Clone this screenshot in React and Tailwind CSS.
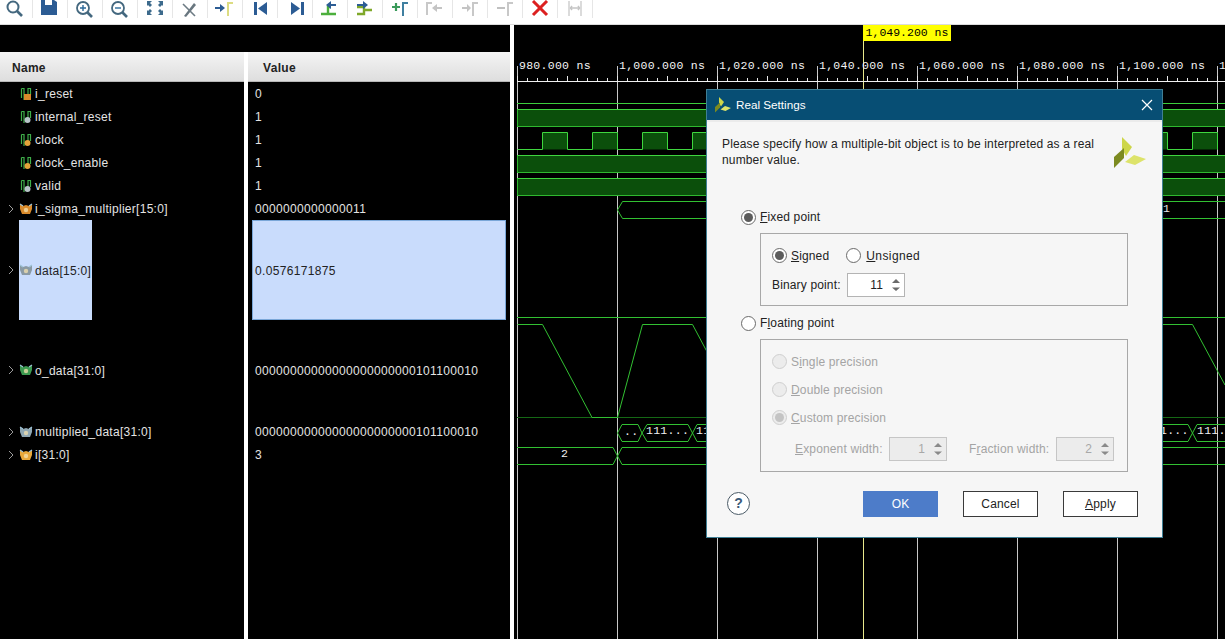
import React from "react";

const sans = { fontFamily: '"Liberation Sans", Arial, sans-serif' };
const mono = '"Liberation Mono", monospace';

const signals = [
  { name: "i_reset", value: "0", color: "#d98a2b", shape: "square", h: "h-[23px]" },
  { name: "internal_reset", value: "1", color: "#b8c4c8", shape: "circle", h: "h-[23px]" },
  { name: "clock", value: "1", color: "#e5a33a", shape: "circle", h: "h-[23px]" },
  { name: "clock_enable", value: "1", color: "#e5a33a", shape: "circle", h: "h-[23px]" },
  { name: "valid", value: "1", color: "#b8c4c8", shape: "circle", h: "h-[23px]" },
  { name: "i_sigma_multiplier[15:0]", value: "0000000000000011", color: "#d98a2b", shape: "bus", h: "h-[23px]", bus: true },
  { name: "data[15:0]", value: "0.0576171875", color: "#8a9aa4", shape: "bus", h: "h-[100px]", bus: true, selected: true, tall: true },
  { name: "o_data[31:0]", value: "00000000000000000000000101100010", color: "#3c9a50", shape: "bus", h: "h-[100px]", bus: true, tall: true },
  { name: "multiplied_data[31:0]", value: "00000000000000000000000101100010", color: "#90a8b4", shape: "bus", h: "h-[23px]", bus: true },
  { name: "i[31:0]", value: "3", color: "#e8a83a", shape: "bus", h: "h-[23px]", bus: true },
];

const SignalIcon = ({ color, shape }) => {
  if (shape === "bus") {
    return (
      <svg width="14" height="12" viewBox="0 0 14 12" className="shrink-0">
        <path d="M1 1l3 2 3-1 3 1 3-2v5l-2 5H3L1 6z" fill={color} />
        <path d="M1 1l3 2M13 1l-3 2" stroke="#9ec4d8" strokeWidth="1.2" fill="none" />
        <circle cx="7" cy="7" r="2.2" fill="#f4e2b0" opacity="0.75" />
      </svg>
    );
  }
  return (
    <svg width="14" height="14" viewBox="0 0 14 14" className="shrink-0">
      <path d="M2.5 11V1.5M2.5 1.5H5V13M9 8V1.5H11.5V8" stroke="#3fae4a" strokeWidth="1.2" fill="none" />
      {shape === "square" ? (
        <rect x="5" y="7" width="7" height="6" fill={color} />
      ) : (
        <circle cx="8.5" cy="10" r="3" fill={color} />
      )}
    </svg>
  );
};

// toolbar marker: the yellow or grey bracket used by several icons
const Bracket = ({ x, c = "#dcdc82" }) => <path d={`M${x} 16V3h5`} stroke={c} strokeWidth="2" fill="none" />;

const toolbarIcons = [
  <g key="s" fill="none" stroke="#44687f" strokeWidth="2"><circle cx="14" cy="7" r="5.5" /><path d="M18 11l5 5" strokeWidth="2.6" /></g>,
  <path key="d" d="M7 0h4v5h7V0h2l3 2v13H7z" fill="#2c5c94" />,
  <g key="zi" fill="none" stroke="#44687f" strokeWidth="1.8"><circle cx="14" cy="8" r="6" /><path d="M18.5 12.5l4.5 4.5" strokeWidth="2.6" /><path d="M11 8h6M14 5v6" stroke="#2c6a9a" strokeWidth="1.4" /></g>,
  <g key="zo" fill="none" stroke="#44687f" strokeWidth="1.8"><circle cx="14" cy="8" r="6" /><path d="M18.5 12.5l4.5 4.5" strokeWidth="2.6" /><path d="M11 8h6" stroke="#2c6a9a" strokeWidth="1.4" /></g>,
  <g key="f" fill="#3c6a8c"><path d="M8 1h5l-2 2 2 2-2 2-2-2-1 1zM24 1h-5l2 2-2 2 2 2 2-2 1 1zM8 15h5l-2-2 2-2-2-2-2 2-1-1zM24 15h-5l2-2-2-2 2-2 2 2 1-1z" /></g>,
  <g key="x" fill="none"><path d="M10 16L20 3l2 2-10 12z" fill="#68767f" /><path d="M9 4l12 12" stroke="#6d7b84" strokeWidth="1.6" /></g>,
  <g key="m"><path d="M6 7h5V4l5 4-5 4V9H6z" fill="#2c5c94" /><Bracket x={19} /></g>,
  <g key="p"><rect x="10" y="2" width="3" height="13" fill="#2c5c94" /><path d="M23 2v13l-9-6.5z" fill="#2c5c94" /></g>,
  <g key="n"><rect x="22" y="2" width="3" height="13" fill="#2c5c94" /><path d="M12 2v13l9-6.5z" fill="#2c5c94" /></g>,
  <g key="e1"><path d="M7 14h7V7h3M14 14h8" stroke="#4caf3c" strokeWidth="2.4" fill="none" /><path d="M22 4h-5V1l-5 4 5 4V6h5z" fill="#2c5c94" /></g>,
  <g key="e2"><path d="M8 7h7v7h-7M15 10h8" stroke="#7fa82a" strokeWidth="2.4" fill="none" /><path d="M8 4h6V1l5 4-5 4V6H8z" fill="#2c5c94" /></g>,
  <g key="a"><path d="M8 7h8M12 3v8" stroke="#3a9a5a" strokeWidth="2.2" /><path d="M19 16V3h5" stroke="#3f7fa0" strokeWidth="2" fill="none" /></g>,
  <g key="g1"><path d="M8 15V3h5" stroke="#c8c8c8" strokeWidth="2" fill="none" /><path d="M23 7h-5V4l-5 4 5 4V9h5z" fill="#c4c4c4" /></g>,
  <g key="g2"><path d="M8 7h5V4l4 4-4 4V9H8z" fill="#c4c4c4" /><Bracket x={19} c="#c8c8c8" /></g>,
  <g key="g3"><path d="M8 8h8" stroke="#c0c0c0" strokeWidth="2" /><Bracket x={19} c="#c8c8c8" /></g>,
  <g key="del"><path d="M9 1l14 14M23 1L9 15" stroke="#dc2020" strokeWidth="3" /></g>,
  <g key="w" fill="none" stroke="#cfcfcf" strokeWidth="1.5"><path d="M10 1v15M22 1v15" /><path d="M12 8h8" stroke="#c4c4c4" /><path d="M13 6l-1.5 2 1.5 2M19 6l1.5 2-1.5 2" stroke="#c4c4c4" /></g>,
];

const rulerLabels = [
  ["980.000 ns", 519],
  ["1,000.000 ns", 619],
  ["1,020.000 ns", 719],
  ["1,040.000 ns", 819],
  ["1,060.000 ns", 919],
  ["1,080.000 ns", 1019],
  ["1,100.000 ns", 1119],
  ["1", 1219],
];

const minorTicks = Array.from({ length: 71 }, (_, i) => 517.5 + i * 10);
const gridLines = [517.5, 617.5, 717.5, 817.5, 917.5, 1017.5, 1117.5, 1217.5];

let clockPath = "M517.5 149.5";
for (let x = 542.5; x < 1225; x += 50) {
  clockPath += `H${x}V132.5H${x + 25}V149.5`;
}

const Waves = () => (
  <svg viewBox="514 25 711 614" width="711" height="614" className="block">
    {/* vertical grid */}
    {gridLines.map((x) => (
      <line key={x} x1={x} x2={x} y1="66" y2="639" stroke="#c8c8c8" />
    ))}
    <line x1="863.5" x2="863.5" y1="41" y2="639" stroke="#e8e88c" />

    {/* ruler */}
    <line x1="517" x2="1225" y1="81.5" y2="81.5" stroke="#f0f0f0" />
    {minorTicks.map((x, i) => (
      <line key={x} x1={x} x2={x} y1={i % 5 === 0 ? 76 : 78} y2="81" stroke="#e8e8e8" />
    ))}
    {rulerLabels.map(([t, x]) => (
      <text key={x} x={x} y="69" fill="#f4f4f4" fontSize="11.5" fontFamily={mono}>
        {t}
      </text>
    ))}

    {/* i_reset */}
    <line x1="517" x2="1225" y1="103.5" y2="103.5" stroke="#3ccf3c" />
    {/* internal_reset */}
    <rect x="517.5" y="109.5" width="708" height="17" fill="#0b4f0b" stroke="#2fb82f" />
    <line x1="517" x2="1225" y1="109.5" y2="109.5" stroke="#3fd63f" />
    {/* clock */}
    {Array.from({ length: 14 }, (_, i) => (
      <rect key={i} x={542.5 + i * 50} y="132.5" width="25" height="17" fill="#0b4f0b" />
    ))}
    <path d={clockPath} fill="none" stroke="#3fd63f" />
    {/* clock_enable and valid */}
    <rect x="517.5" y="155.5" width="708" height="17" fill="#0b4f0b" stroke="#2fb82f" />
    <line x1="517" x2="1225" y1="155.5" y2="155.5" stroke="#3fd63f" />
    <rect x="517.5" y="178.5" width="708" height="17" fill="#0b4f0b" stroke="#2fb82f" />
    <line x1="517" x2="1225" y1="178.5" y2="178.5" stroke="#3fd63f" />

    {/* i_sigma_multiplier */}
    <path d="M1225 201.5H622.5L617.5 210L622.5 218.5H1225" fill="none" stroke="#32c032" />
    <text x="1163" y="212" fill="#e8e8e8" fontSize="11.5" fontFamily={mono}>1</text>

    {/* data */}
    <line x1="517" x2="1225" y1="317.5" y2="317.5" stroke="#32c032" />

    {/* o_data */}
    <line x1="517" x2="1225" y1="417.5" y2="417.5" stroke="#156815" />
    <path d="M517.5 324.5H542.5L592 417.5H617.5L642.5 324.5H692.5L742 417.5" fill="none" stroke="#32c032" />
    <path d="M1163 324.5H1192.5L1225 385" fill="none" stroke="#32c032" />

    {/* multiplied_data */}
    <path d="M642 433L638 424.5H622L617.5 433L622 441.5H638L642 433L647 424.5H688L692.5 433L697 424.5H707M642 433L647 441.5H688L692.5 433L697 441.5H707" fill="none" stroke="#32c032" />
    <path d="M1163 424.5H1188L1192.5 433L1197 424.5H1225M1163 441.5H1188L1192.5 433L1197 441.5H1225" fill="none" stroke="#32c032" />
    <text x="624" y="435" fill="#f0f0f0" fontSize="11.5" fontFamily={mono}>..</text>
    <text x="646" y="434" fill="#f0f0f0" fontSize="11.5" fontFamily={mono}>111...</text>
    <text x="696" y="434" fill="#f0f0f0" fontSize="11.5" fontFamily={mono}>11</text>
    <text x="1160" y="434" fill="#f0f0f0" fontSize="11.5" fontFamily={mono}>1...</text>
    <text x="1197" y="434" fill="#f0f0f0" fontSize="11.5" fontFamily={mono}>111.</text>

    {/* i */}
    <path d="M517 447.5H613L622 464.5H1225M517 464.5H613L622 447.5H1225" fill="none" stroke="#32c032" />
    <text x="561" y="457" fill="#f0f0f0" fontSize="11.5" fontFamily={mono}>2</text>
  </svg>
);

const Radio = ({ checked, disabled, x = "" }) => (
  <span
    className={`w-[15px] h-[15px] rounded-full border flex items-center justify-center shrink-0 ${
      disabled ? "border-[#cfcfcf] bg-[#ececec]" : "border-[#6a6a6a] bg-white"
    } ${x}`}
  >
    {checked && <span className={`w-[9px] h-[9px] rounded-full ${disabled ? "bg-[#c4c4c4]" : "bg-[#5c5c5c]"}`} />}
  </span>
);

const Spinner = ({ value, disabled, w = "w-[58px]" }) => (
  <div
    className={`${w} h-[24px] border flex items-center justify-end ${
      disabled ? "bg-[#ececec] border-[#c6c6c6] text-[#a8a8a8]" : "bg-white border-[#b4b4b4] text-[#222]"
    }`}
  >
    <span className="mr-[8px]">{value}</span>
    <svg width="10" height="16" viewBox="0 0 10 16" className="mr-[3px]">
      <path d="M1 6l4-4 4 4zM1 10.5h8l-4 3.5z" fill={disabled ? "#8a8a8a" : "#6a6a6a"} />
    </svg>
  </div>
);

const Logo = ({ s }) => (
  <svg width={s} height={s} viewBox="0 0 32 32">
    <path d="M8 0L18 10L12 19L8 12z" fill="#cdd64a" />
    <path d="M0 20L10 11V21L0 31z" fill="#7c8a20" />
    <path d="M11 25L20 18L32 22L21 28z" fill="#dde36a" />
  </svg>
);

const Dialog = () => (
  <div
    className="absolute left-[706px] top-[89px] w-[457px] h-[449px] bg-[#f6f6f6] border border-[#3f7f95] flex flex-col text-[12px] text-[#222] tracking-[0.15px]"
    style={sans}
  >
    <div className="h-[30px] bg-[#074e74] flex items-center pl-[8px] pr-[9px] text-white shrink-0">
      <Logo s={16} />
      <span className="ml-[5px] flex-1 text-[11.7px] tracking-normal">Real Settings</span>
      <svg width="12" height="12" viewBox="0 0 12 12">
        <path d="M1 1l10 10M11 1L1 11" stroke="#fff" strokeWidth="1.2" />
      </svg>
    </div>
    <div className="h-[2px] bg-[#ebebeb] shrink-0" />
    <div className="flex justify-between pl-[15px] pr-[16px] pt-[14px] shrink-0">
      <p className="w-[385px] leading-[16px]">
        Please specify how a multiple-bit object is to be interpreted as a real number value.
      </p>
      <div className="pt-[1px]">
        <Logo s={32} />
      </div>
    </div>

    <div className="pl-[34px] mt-[40px] flex items-center h-[16px]">
      <Radio checked />
      <span className="ml-[4px]">
        <u>F</u>ixed point
      </span>
    </div>

    <div className="ml-[53px] w-[368px] h-[73px] mt-[8px] border border-[#a8a8a8] pl-[11px] pt-[14px]">
      <div className="flex items-center h-[15px]">
        <Radio checked />
        <span className="ml-[4px]">
          <u>S</u>igned
        </span>
        <Radio x="ml-[17px]" />
        <span className="ml-[5px] tracking-[0.4px]">
          <u>U</u>nsigned
        </span>
      </div>
      <div className="flex items-center mt-[10px]">
        <span className="w-[75px]">Binary point:</span>
        <Spinner value="11" />
      </div>
    </div>

    <div className="pl-[34px] mt-[9px] flex items-center h-[16px]">
      <Radio />
      <span className="ml-[4px]">
        F<u>l</u>oating point
      </span>
    </div>

    <div className="ml-[53px] w-[368px] h-[133px] mt-[8px] border border-[#a8a8a8] pl-[11px] pt-[14px] text-[#a4a4a4]">
      <div className="flex flex-col gap-[13px]">
        <div className="flex items-center h-[15px]">
          <Radio disabled />
          <span className="ml-[4px]">
            S<u>i</u>ngle precision
          </span>
        </div>
        <div className="flex items-center h-[15px]">
          <Radio disabled />
          <span className="ml-[4px]">
            <u>D</u>ouble precision
          </span>
        </div>
        <div className="flex items-center h-[15px]">
          <Radio disabled checked />
          <span className="ml-[4px]">
            <u>C</u>ustom precision
          </span>
        </div>
      </div>
      <div className="flex items-center mt-[12px] ml-[23px]">
        <span className="w-[94px]">
          <u>E</u>xponent width:
        </span>
        <Spinner value="1" disabled />
        <span className="ml-[22px] w-[87px]">
          F<u>r</u>action width:
        </span>
        <Spinner value="2" disabled />
      </div>
    </div>

    <div className="flex items-center mt-[18px] pl-[20px] h-[28px]">
      <div className="w-[23px] h-[23px] mb-[2px] rounded-full border-[1.5px] border-[#4a5a66] bg-white flex items-center justify-center text-[14px] font-bold text-[#3a5a78]">
        ?
      </div>
      <button className="ml-[113px] w-[75px] h-[26px] bg-[#4d7cc9] text-white">OK</button>
      <button className="ml-[25px] w-[75px] h-[26px] bg-white border border-[#3a3a3a]">Cancel</button>
      <button className="ml-[25px] w-[75px] h-[26px] bg-white border border-[#3a3a3a]">
        <u>A</u>pply
      </button>
    </div>
  </div>
);

const HeaderCell = ({ children, className }) => (
  <div
    className={`h-[30px] pt-[2px] bg-gradient-to-b from-[#f4f4f4] to-[#dedede] border-b border-[#b8b8b8] flex items-center font-bold text-[#222] ${className}`}
  >
    {children}
  </div>
);

export default function App() {
  return (
    <div className="relative w-[1225px] h-[639px] overflow-hidden bg-black flex flex-col text-[12px] tracking-[0.28px]" style={sans}>
      {/* toolbar */}
      <div className="h-[25px] bg-white border-b border-[#dcdcdc] flex shrink-0 overflow-hidden -ml-[2px]">
        {toolbarIcons.map((icon, i) => (
          <div key={i} className="w-[35px] h-[18px] border-r border-[#e6e6e6] shrink-0">
            <svg width="35" height="18" viewBox="-1 0 35 18" className="block">
              {icon}
            </svg>
          </div>
        ))}
      </div>

      <div className="flex flex-1 min-h-0">
        {/* name column */}
        <div className="w-[244px] pt-[27px] text-[#e4e4e4] shrink-0">
          <HeaderCell className="pl-[12px]">Name</HeaderCell>
          {signals.map((s) => (
            <div key={s.name} className={`${s.h} flex items-center relative pl-[19px]`}>
              {s.bus && (
                <svg width="6" height="10" viewBox="0 0 6 10" className="absolute left-[8px] top-1/2 -translate-y-1/2">
                  <path d="M1 1l4 4-4 4" fill="none" stroke="#9a9a9a" />
                </svg>
              )}
              <div className={`h-full flex items-center pr-[1px] ${s.selected ? "bg-[#c9dcfc] text-[#222]" : ""}`}>
                <SignalIcon color={s.color} shape={s.shape} />
                <span className={`ml-[2px] ${s.tall ? "pt-[2px]" : ""}`}>{s.name}</span>
              </div>
            </div>
          ))}
        </div>
        <div className="w-[4px] mt-[27px] bg-white shrink-0" />

        {/* value column */}
        <div className="w-[262px] pt-[27px] text-[#e4e4e4] shrink-0 tracking-[0.33px]">
          <HeaderCell className="pl-[15px]">Value</HeaderCell>
          {signals.map((s) => (
            <div key={s.name} className={`${s.h} flex items-center`}>
              {s.selected ? (
                <div className="ml-[4px] w-[254px] h-full bg-[#c9dcfc] border border-[#7aa7d8] text-[#222] flex items-center pl-[2px] pt-[2px]">
                  {s.value}
                </div>
              ) : (
                <span className={`ml-[7px] ${s.tall ? "pt-[2px]" : ""}`}>{s.value}</span>
              )}
            </div>
          ))}
        </div>
        <div className="w-[4px] bg-white shrink-0" />

        {/* waveform */}
        <div className="flex-1 relative">
          <Waves />
          <div
            className="absolute left-[349px] top-0 w-[88px] h-[16px] bg-[#ffff00] text-black text-[11.5px] flex items-center justify-center tracking-normal"
            style={{ fontFamily: mono }}
          >
            1,049.200 ns
          </div>
        </div>
      </div>

      <Dialog />
    </div>
  );
}
